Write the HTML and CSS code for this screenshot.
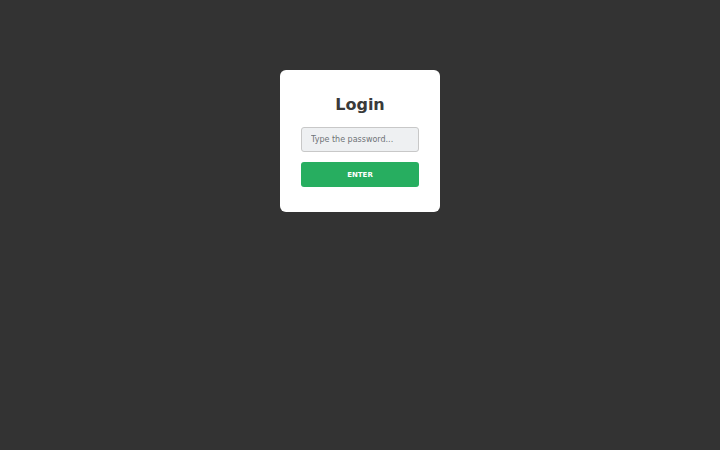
FILE: index.html
```html
<!DOCTYPE html>
<html lang="en">
<head>
<meta charset="utf-8">
<title>Login</title>
<link rel="stylesheet" href="styles.css">
</head>
<body>
<main class="page">
  <form class="card" onsubmit="return false">
    <h1 class="title">Login</h1>
    <input class="password" type="password" placeholder="Type the password...">
    <button class="enter" type="submit">ENTER</button>
  </form>
</main>
</body>
</html>
```
FILE: styles.css
```css
html, body {
  margin: 0;
  padding: 0;
  height: 100%;
}
body {
  background: #333333;
  font-family: "DejaVu Sans", "Liberation Sans", sans-serif;
}
.page {
  display: flex;
  justify-content: center;
  padding-top: 70px;
}
.card {
  width: 160px;
  box-sizing: border-box;
  background: #ffffff;
  border-radius: 6px;
  padding: 25px 21px 25px 21px;
  display: flex;
  flex-direction: column;
  align-items: stretch;
}
.title {
  margin: 0 0 12px 0;
  font-size: 16px;
  line-height: 20px;
  font-weight: bold;
  color: #3a3a3a;
  text-align: center;
}
.password {
  height: 25px;
  box-sizing: border-box;
  margin: 0;
  padding: 0 9px;
  border: 1px solid #c8c8c8;
  border-radius: 3px;
  background: #eef0f2;
  font-family: "DejaVu Sans", sans-serif;
  font-size: 8px;
  color: #333;
  outline: none;
}
.password::placeholder {
  color: #6f7377;
}
.enter {
  margin: 10px 0 0 0;
  height: 25px;
  border: none;
  border-radius: 3px;
  background: #27ae60;
  color: #ffffff;
  font-family: "DejaVu Sans", sans-serif;
  font-size: 7px;
  font-weight: bold;
  cursor: pointer;
}
```
